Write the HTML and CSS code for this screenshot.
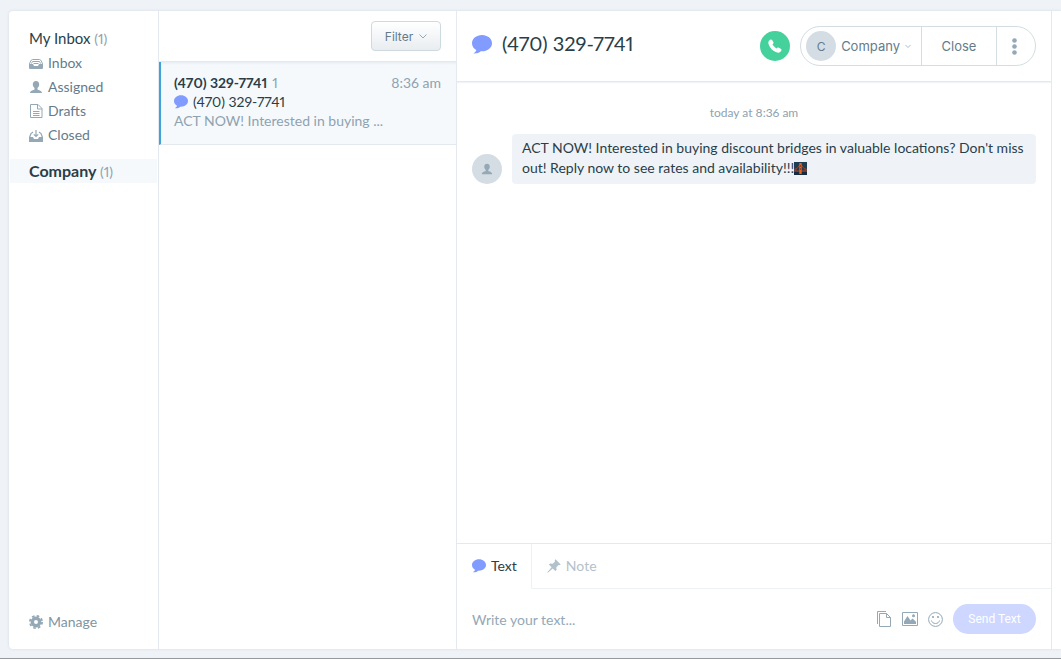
FILE: index.html
```html
<!DOCTYPE html>
<html lang="en">
<head>
    <meta charset="UTF-8">
    <meta name="viewport" content="width=device-width, initial-scale=1.0">
    <title>Inbox</title>
    <link rel="stylesheet" href="styles.css">
</head>
<body>
    <svg class="icon-defs" aria-hidden="true">
        <symbol id="bubble" viewBox="0 0 20 19">
            <path d="M10 0C4.500 0 0 3.600 0 8.200c0 2.900 1.600 5.300 4.300 6.700-.3 1.300-1.200 2.400-2.900 3.500 2.900.3 5.600-.5 7.400-2.200C15 16.600 20 13.100 20 8.200 20 3.600 15.500 0 10 0z"/>
        </symbol>
        <symbol id="person" viewBox="0 0 14 14">
            <path d="M7 1c2 0 3.200 1.300 3.200 3.300 0 1.600-.7 2.900-1.700 3.600v1.500c.7.600 4.500.9 4.500 3.600H1c0-2.700 3.800-3 4.500-3.600V7.900C4.500 7.200 3.800 5.900 3.800 4.300 3.800 2.300 5 1 7 1z"/>
        </symbol>
    </svg>

    <main class="app">
        <nav class="sidebar">
            <h2 class="sidebar-title">My Inbox <span class="count">(1)</span></h2>
            <a class="sidebar-link" href="#inbox">
                <svg class="sidebar-icon" viewBox="0 0 14 14">
                    <path d="M0 8h4l1 2h4l1-2h4v4q0 1-1 1H1q-1 0-1-1z" fill="currentColor"/>
                    <path d="M.5 8Q1.500 3.500 3.500 3.500h7Q12.500 3.500 13.500 8M2.500 7.500l1-2h7l1 2M4.500 7.500h5" fill="none" stroke="currentColor"/>
                </svg>
                Inbox
            </a>
            <a class="sidebar-link" href="#assigned">
                <svg class="sidebar-icon" fill="currentColor"><use href="#person"/></svg>
                Assigned
            </a>
            <a class="sidebar-link" href="#drafts">
                <svg class="sidebar-icon" viewBox="0 0 14 14" fill="none" stroke="currentColor">
                    <path d="M1.500.5h7.500l4 4v9h-11.500zM8.500.5v4.500h4.500"/>
                    <path d="M4 7.500h6.500M4 9.500h6.500M4 11.500h6.500"/>
                </svg>
                Drafts
            </a>
            <a class="sidebar-link" href="#closed">
                <svg class="sidebar-icon" viewBox="0 0 14 14">
                    <path d="M0 9h4l1 2h4l1-2h4v5H0z" fill="currentColor"/>
                    <path d="M.5 9.500L2 5.500l2-1.500M13.500 9.500L12 5.500 10 4M7 2v6.500M4.800 6.300L7 8.500l2.200-2.200" fill="none" stroke="currentColor" stroke-width="1.200"/>
                </svg>
                Closed
            </a>
            <a class="sidebar-team" href="#company">Company <span class="count">(1)</span></a>
            <a class="sidebar-link sidebar-manage" href="#manage">
                <svg class="sidebar-icon" viewBox="0 0 14 14">
                    <circle cx="7" cy="7" r="3.700" fill="none" stroke="currentColor" stroke-width="3.400"/>
                    <circle cx="7" cy="7" r="6.100" fill="none" stroke="currentColor" stroke-width="1.800" stroke-dasharray="2.600 2.190"/>
                </svg>
                Manage
            </a>
        </nav>

        <section class="threads">
            <div class="threads-header">
                <button class="filter-button" type="button">
                    Filter
                    <svg class="chevron" viewBox="0 0 8 8"><path d="M.5 2.500L4 6l3.500-3.500"/></svg>
                </button>
            </div>
            <a class="thread" href="#thread">
                <span class="thread-top">
                    <span class="thread-name"><strong>(470) 329-7741</strong> <span class="muted">1</span></span>
                    <span class="muted">8:36 am</span>
                </span>
                <span class="thread-number">
                    <svg class="bubble-icon"><use href="#bubble"/></svg>
                    (470) 329-7741
                </span>
                <span class="thread-preview">ACT NOW! Interested in buying ...</span>
            </a>
        </section>

        <section class="conversation">
            <header class="conversation-header">
                <svg class="bubble-icon bubble-large"><use href="#bubble"/></svg>
                <h1 class="conversation-title">(470) 329-7741</h1>
                <button class="call-button" type="button" aria-label="Call">
                    <svg class="call-icon" viewBox="0 0 14 14">
                        <path d="M1.200 1.500C2.300.1 3.600.1 4.300 1.200l1 1.700c.5.9.2 1.500-.8 2.400.8 1.700 2.200 3.200 4 4.100.9-1 1.500-1.200 2.400-.7l1.800 1.100c1.100.7 1.100 1.900-.3 3-1 .9-2.400 1.100-4 .5C4.700 11.900 2 9.200.7 5.600c-.6-1.700-.4-3.100.5-4.100z"/>
                    </svg>
                </button>
                <div class="actions">
                    <button class="action action-assign" type="button">
                        <span class="avatar">C</span>
                        Company
                        <svg class="chevron chevron-small" viewBox="0 0 8 8"><path d="M.5 2.500L4 6l3.500-3.500"/></svg>
                    </button>
                    <button class="action action-close" type="button">Close</button>
                    <button class="action action-more" type="button" aria-label="More">
                        <svg class="dots" viewBox="0 0 5 17">
                            <circle cx="2.500" cy="2.500" r="2.300"/>
                            <circle cx="2.500" cy="8.500" r="2.300"/>
                            <circle cx="2.500" cy="14.500" r="2.300"/>
                        </svg>
                    </button>
                </div>
            </header>

            <div class="messages">
                <time class="message-date">today at 8:36 am</time>
                <div class="message">
                    <span class="avatar">
                        <svg class="avatar-icon"><use href="#person"/></svg>
                    </span>
                    <p class="message-text">ACT NOW! Interested in buying discount bridges in valuable locations? Don't miss out! Reply now to see rates and availability!!!<svg class="bridge" viewBox="0 0 13 13" role="img" aria-label="Bridge at night">
                        <path d="M0 0h13v13H0z" fill="#1f3d54"/>
                        <path d="M0 10h13v3H0z" fill="#182c40"/>
                        <path d="M0 9h13" stroke="#a5482a"/>
                        <path d="M0 7.500Q4 7 5.500 3M13 7.500Q9 7 7.500 3M2 7v2M11 7v2" stroke="#a5482a" stroke-width=".8" fill="none"/>
                        <path d="M6.500 1v11" stroke="#e8651f" stroke-width="2.400"/>
                        <path d="M6.500 3v2M6.500 6v2" stroke="#8a3b22" stroke-width=".8"/>
                    </svg></p>
                </div>
            </div>

            <form class="composer">
                <div class="tabs">
                    <button class="tab tab-active" type="button">
                        <svg class="bubble-icon"><use href="#bubble"/></svg>
                        Text
                    </button>
                    <button class="tab" type="button">
                        <svg class="pin-icon" viewBox="0 0 14 14">
                            <path d="M8.600.3l5.100 5.100-1.200.9-1-.2-2.200 2.400.3 2.500-1.200 1.100-2.700-2.700L.8 13.700l-.5-.5 4.300-4.900-2.700-2.700 1.200-1.200 2.600.4L8 2.500l-.3-1.200z"/>
                        </svg>
                        Note
                    </button>
                </div>
                <div class="compose-row">
                    <input class="compose-input" type="text" placeholder="Write your text..." aria-label="Message">
                    <button class="tool" type="button" aria-label="Templates">
                        <svg width="15" height="16" viewBox="0 0 15 16">
                            <path d="M2.500 2.500h7l4 4v9h-11zM9.500 2.500v4h4M.5 13V.5H9"/>
                        </svg>
                    </button>
                    <button class="tool" type="button" aria-label="Image">
                        <svg width="16" height="14" viewBox="0 0 16 14">
                            <path d="M.5.5h15v13H.5z"/>
                            <path d="M2 12V9.500L5.500 4l3 4.500 2-2L14 9.800V12z" fill="currentColor" stroke="none"/>
                            <circle cx="11.500" cy="3.800" r="1.500" fill="currentColor" stroke="none"/>
                        </svg>
                    </button>
                    <button class="tool" type="button" aria-label="Emoji">
                        <svg width="15" height="15" viewBox="0 0 15 15">
                            <circle cx="7.500" cy="7.500" r="6.900"/>
                            <path d="M3.500 8.500c.7 4 7.300 4 8 0"/>
                            <circle cx="5" cy="5" r="1.100" fill="currentColor" stroke="none"/>
                            <circle cx="10" cy="5" r="1.100" fill="currentColor" stroke="none"/>
                        </svg>
                    </button>
                    <button class="send-button" type="submit">Send Text</button>
                </div>
            </form>
        </section>
        <aside class="details"></aside>
    </main>
</body>
</html>
```
FILE: styles.css
```css
* {
    box-sizing: border-box;
}

body {
    margin: 0;
    height: 100vh;
    display: flex;
    padding: 11px 0 9px 9px;
    border-bottom: 1px solid #96999c;
    background-color: #eff3f8;
    color: #2a3e48;
    font-family: 'Lato', sans-serif;
    font-size: 14px;
    font-variant-numeric: proportional-nums;
    line-height: 19px;
}

button, input {
    font-family: inherit;
    font-size: inherit;
    border: none;
    background: none;
    padding: 0;
    margin: 0;
}

button {
    cursor: pointer;
}

a {
    color: inherit;
    text-decoration: none;
}

svg {
    flex-shrink: 0;
}

.icon-defs {
    position: absolute;
    width: 0;
    height: 0;
}

.app {
    flex: 1;
    display: flex;
    min-width: 0;
    background-color: #ffffff;
    border-radius: 4px 0 0 4px;
    box-shadow: 0 0 3px rgba(60, 90, 120, 0.15);
}

/* sidebar */
.sidebar {
    width: 150px;
    display: flex;
    flex-direction: column;
    padding: 15px 0;
    border-right: 1px solid #e4e9ef;
}

.sidebar-title {
    margin: 0;
    padding-left: 20px;
    font-size: 15px;
    font-weight: normal;
    line-height: 24px;
}

.count {
    color: #8fa2b0;
    font-size: 14px;
    font-weight: normal;
}

.sidebar-link {
    display: flex;
    align-items: center;
    gap: 5px;
    padding-left: 20px;
    color: #647c8a;
    line-height: 24px;
}

.sidebar-icon {
    width: 14px;
    height: 14px;
    color: #94a8b6;
}

.sidebar-team {
    margin: 12px 1px 0;
    padding-left: 19px;
    background-color: #f5f9fc;
    font-size: 16px;
    font-weight: bold;
    line-height: 23px;
}

.sidebar-manage {
    margin-top: auto;
    color: #8195a2;
}

/* thread list */
.threads {
    width: 298px;
    border-right: 1px solid #e4e9ef;
}

.threads-header {
    display: flex;
    justify-content: flex-end;
    padding: 10px 15px;
    border-bottom: 1px solid #e4e9ef;
}

.filter-button {
    display: flex;
    align-items: center;
    justify-content: center;
    gap: 6px;
    width: 70px;
    height: 30px;
    border: 1px solid #cfd9e0;
    border-radius: 4px;
    background: linear-gradient(#ffffff, #e9edf1);
    color: #647c8a;
    font-family: 'Inter', sans-serif;
    font-size: 12px;
}

.chevron {
    width: 8px;
    height: 8px;
    fill: none;
    stroke: #94a8b6;
}

.chevron-small {
    width: 6px;
    height: 6px;
}

.thread {
    display: flex;
    flex-direction: column;
    padding: 11px 15px 14px 13px;
    border-left: 2px solid #3fa2db;
    border-bottom: 1px solid #e4e9ef;
    background-color: #f5f9fc;
    box-shadow: inset 0 3px 3px -2px #e4e9ef;
}

.thread-top {
    display: flex;
    justify-content: space-between;
}

.thread-name {
    display: flex;
    gap: 5px;
}

.muted, .thread-preview {
    color: #8fa2b0;
}

.thread-number {
    display: flex;
    align-items: center;
    gap: 5px;
}

.bubble-icon {
    width: 14px;
    height: 14px;
    fill: #819bff;
}

.bubble-large {
    width: 20px;
    height: 19px;
    margin-bottom: 3px;
}

/* conversation */
.conversation {
    flex: 1;
    min-width: 0;
    display: flex;
    flex-direction: column;
}

.conversation-header {
    display: flex;
    align-items: center;
    gap: 10px;
    height: 71px;
    padding: 0 15px;
    border-bottom: 1px solid #e4e9ef;
    box-shadow: 0 1px 1px #f0f3f7;
}

.conversation-title {
    flex: 1;
    margin: 0;
    padding-bottom: 6px;
    font-size: 20px;
    font-weight: normal;
    line-height: 24px;
}

.call-button {
    display: flex;
    align-items: center;
    justify-content: center;
    width: 30px;
    height: 30px;
    border-radius: 50%;
    background-color: #45d19c;
}

.call-icon {
    width: 14px;
    height: 14px;
    fill: #ffffff;
}

.actions {
    display: flex;
    height: 40px;
    border: 1px solid #d3dde2;
    border-radius: 20px;
}

.action {
    display: flex;
    align-items: center;
    justify-content: center;
    color: #647c8a;
    font-family: 'Inter', sans-serif;
    font-size: 13px;
}

.action + .action {
    border-left: 1px solid #d3dde2;
}

.action-assign {
    gap: 5px;
    padding: 0 10px 0 5px;
}

.action-close {
    width: 75px;
}

.action-more {
    width: 39px;
    padding-right: 3px;
}

.dots {
    width: 5px;
    height: 17px;
    fill: #94a8b6;
}

.avatar {
    flex-shrink: 0;
    display: flex;
    align-items: center;
    justify-content: center;
    width: 30px;
    height: 30px;
    border-radius: 50%;
    background-color: #d4dde3;
    font-size: 12px;
}

.avatar-icon {
    width: 12px;
    height: 12px;
    fill: #94a8b6;
}

.messages {
    flex: 1;
    padding: 22px 15px;
}

.message-date {
    display: block;
    color: #8fa2b0;
    font-size: 12px;
    line-height: 18px;
    text-align: center;
}

.message {
    display: flex;
    align-items: flex-end;
    gap: 10px;
    margin-top: 12px;
}

.message-text {
    flex: 1;
    margin: 0;
    padding: 4px 5px 6px 10px;
    border-radius: 4px;
    background-color: #eff3f8;
    line-height: 20px;
}

.bridge {
    width: 13px;
    height: 13px;
    vertical-align: -2px;
}

/* composer */
.composer {
    border-top: 1px solid #e4e9ef;
}

.tabs {
    display: flex;
    height: 45px;
}

.tab {
    display: flex;
    align-items: center;
    gap: 5px;
    padding: 0 14px 1px 15px;
    border-bottom: 1px solid #edf1f5;
    color: #b3c1cb;
}

.tab:last-child {
    flex: 1;
}

.tab-active {
    border-right: 1px solid #edf1f5;
    border-bottom-color: transparent;
    color: #2a3e48;
}

.pin-icon {
    width: 14px;
    height: 14px;
    fill: #b3c1cb;
}

.compose-row {
    display: flex;
    align-items: center;
    gap: 10px;
    height: 60px;
    padding: 0 15px;
}

.compose-input {
    flex: 1;
    min-width: 0;
    outline: none;
}

.compose-input::placeholder {
    color: #94a8b6;
}

.tool {
    display: flex;
    color: #94a8b6;
}

.tool svg {
    fill: none;
    stroke: currentColor;
}

.send-button {
    width: 83px;
    height: 30px;
    border-radius: 15px;
    background-color: #cdd7ff;
    color: #ffffff;
    font-family: 'Roboto', sans-serif;
    font-size: 12px;
}

.details {
    width: 10px;
    border-left: 1px solid #e4e9ef;
}
```
